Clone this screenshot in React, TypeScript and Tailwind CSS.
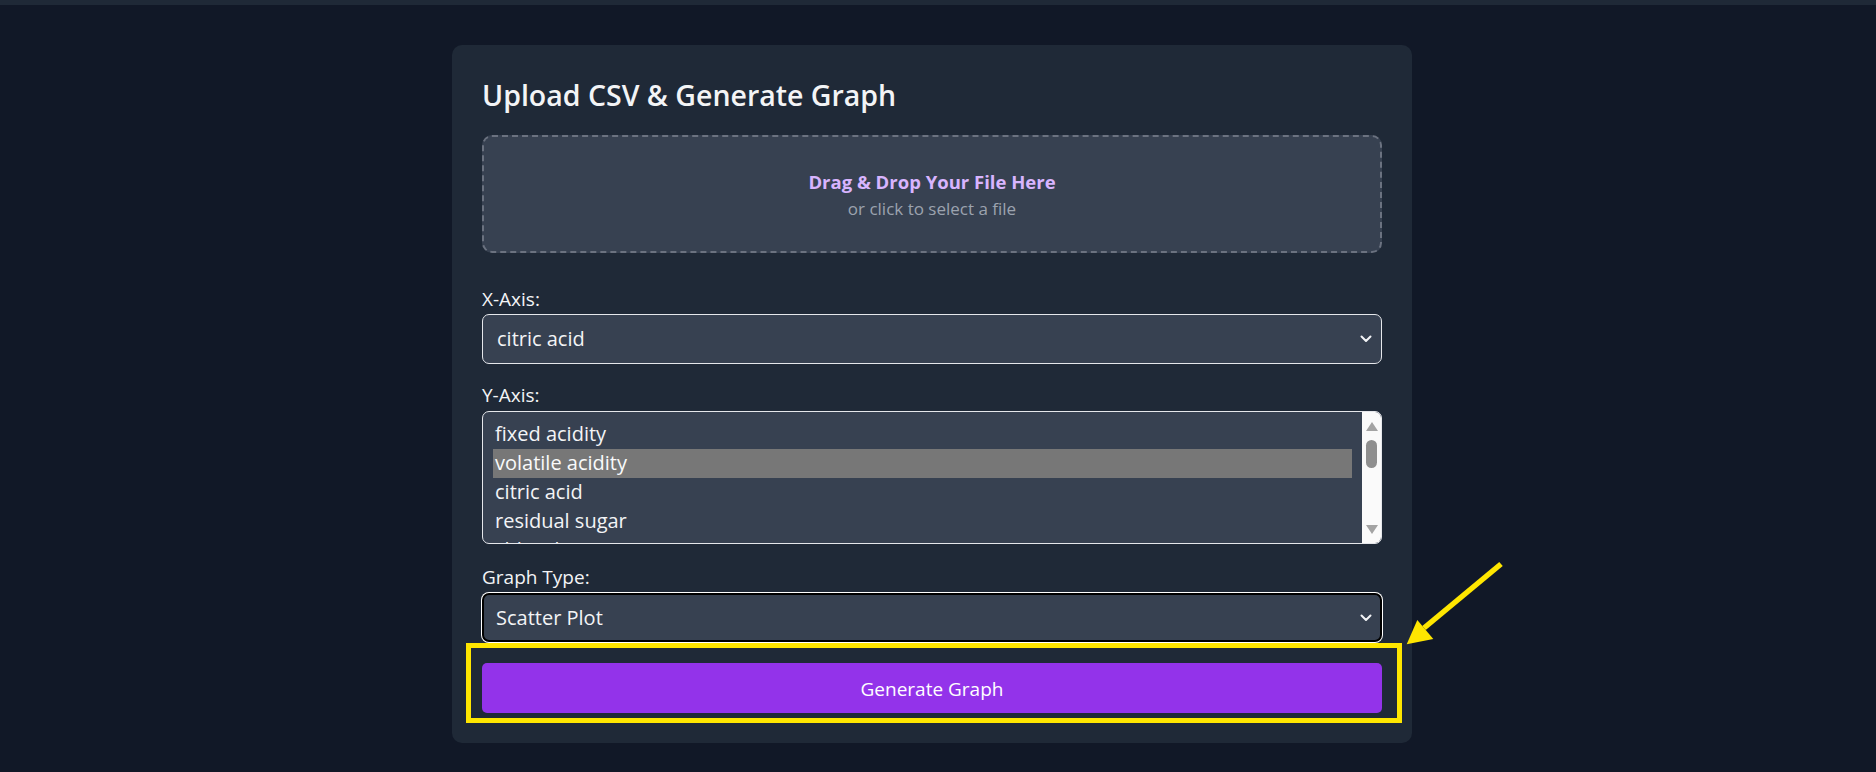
import React from "react";

const yOptions = [
  "fixed acidity",
  "volatile acidity",
  "citric acid",
  "residual sugar",
  "chlorides",
];

function Chevron() {
  return (
    <svg width="12" height="8" viewBox="0 0 12 8" className="shrink-0">
      <path d="M1.5 1.5 L6 6 L10.5 1.5" fill="none" stroke="#f3f4f6" strokeWidth="2" strokeLinecap="round" strokeLinejoin="round" />
    </svg>
  );
}

function FakeSelect({ value, focused }: { value: string; focused?: boolean }) {
  return (
    <div
      className={
        focused
          ? "flex h-[49px] items-center justify-between rounded-[7px] border-2 border-black bg-[#374151] pl-[12px] pr-[8px] text-[20px] text-[#f3f4f6] shadow-[0_0_0_1px_#ffffff]"
          : "flex h-[50px] items-center justify-between rounded-[7px] border border-[#e5e7eb] bg-[#374151] pl-[14px] pr-[9px] text-[20px] text-[#f3f4f6]"
      }
    >
      <span>{value}</span>
      <Chevron />
    </div>
  );
}

function ListBox() {
  return (
    <div className="flex h-[133px] overflow-hidden rounded-[7px] border border-[#e5e7eb] bg-[#374151]">
      <div className="flex-1 overflow-hidden pl-[10px] pr-[10px] pt-[8px]">
        {yOptions.map((opt, i) => (
          <div
            key={opt}
            className={
              i === 1
                ? "h-[29px] bg-[#777777] pl-[2px] text-[20px] leading-[28px] text-[#f9fafb]"
                : "h-[29px] pl-[2px] text-[20px] leading-[28px] text-[#f3f4f6]"
            }
          >
            {opt}
          </div>
        ))}
      </div>
      {/* scrollbar */}
      <div className="flex w-[19px] flex-col items-center bg-[#fafafa] pt-[10px] pb-[9px]">
        <svg width="12" height="9" viewBox="0 0 12 9">
          <path d="M6 0 L12 9 L0 9 Z" fill="#a3a3a3" />
        </svg>
        <div className="mt-[9px] h-[28px] w-[11px] rounded-full bg-[#8f8f8f]" />
        <div className="flex-1" />
        <svg width="12" height="9" viewBox="0 0 12 9">
          <path d="M0 0 L12 0 L6 9 Z" fill="#a3a3a3" />
        </svg>
      </div>
    </div>
  );
}

export default function App() {
  return (
    <div
      className="relative min-h-screen bg-[#111827] text-[#f3f4f6]"
      style={{ fontFamily: '"Open Sans", "Noto Sans", sans-serif' }}
    >
      <div className="h-[5px] bg-[#1f2937]" />

      <div className="flex justify-center pt-[40px] pr-[12px]">
        <div className="w-[960px] rounded-[10px] bg-[#1f2937] p-[30px]">
          {/* Heading */}
          <h1 className="mb-[20px] text-[28.5px] font-semibold leading-[40px] text-[#f3f4f6]">
            Upload CSV &amp; Generate Graph
          </h1>

          {/* Drop zone */}
          <div className="flex h-[118px] flex-col items-center justify-center rounded-[10px] border-2 border-dashed border-[#6b7280] bg-[#374151] pt-[2px]">
            <p className="text-[18.5px] font-bold leading-[28px] text-[#d8b4fe]">
              Drag &amp; Drop Your File Here
            </p>
            <p className="text-[17px] leading-[26px] text-[#9ca3af]">
              or click to select a file
            </p>
          </div>

          {/* X axis */}
          <div className="mt-[30px]">
            <label className="mb-[1px] block pt-[2px] text-[19px] leading-[28px]">X-Axis:</label>
            <FakeSelect value="citric acid" />
          </div>

          {/* Y axis */}
          <div className="mt-[16px]">
            <label className="mb-[1px] block pt-[1px] text-[19px] leading-[29px]">Y-Axis:</label>
            <ListBox />
          </div>

          {/* Graph type */}
          <div className="mt-[18px]">
            <label className="mb-[1px] block pt-[1px] text-[19px] leading-[29px]">Graph Type:</label>
            <FakeSelect value="Scatter Plot" focused />
          </div>

          {/* Button */}
          <div className="relative mt-[21px]">
            <button className="h-[50px] w-full rounded-[5px] bg-[#9333ea] pt-[2px] text-[19px] text-white">
              Generate Graph
            </button>
            <div className="pointer-events-none absolute -left-[16px] -right-[20px] -top-[20px] -bottom-[10px] border-[5px] border-[#ffe600]" />
          </div>
        </div>
      </div>

      {/* annotation arrow */}
      <svg
        className="pointer-events-none absolute left-[1400px] top-[555px]"
        width="110"
        height="95"
        viewBox="0 0 110 95"
      >
        <line x1="101" y1="9" x2="24" y2="73" stroke="#ffe600" strokeWidth="5.5" strokeLinecap="butt" />
        <path d="M6.7 89.3 L17.3 65 L33.3 84 Z" fill="#ffe600" />
      </svg>
    </div>
  );
}
